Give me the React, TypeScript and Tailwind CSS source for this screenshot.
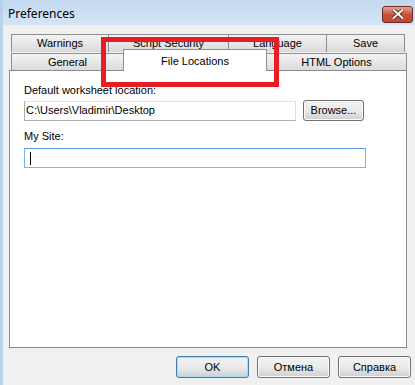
import React from 'react';

const ui = { fontFamily: '"Liberation Sans", Arial, sans-serif' };

function Tab({ label, w }: { label: string; w: number }) {
  return (
    <div
      className="h-[18px] flex items-center justify-center border border-[#8e8f8f] border-b-0 bg-gradient-to-b from-[#f3f3f3] to-[#dadada] text-[11px] text-black -ml-px first:ml-0"
      style={{ width: w }}
    >
      {label}
    </div>
  );
}

function Btn({ label, def, w = 73, h = 22 }: { label: string; def?: boolean; w?: number; h?: number }) {
  return (
    <div
      className={
        'flex items-center justify-center rounded-[3px] border text-[11px] text-black bg-gradient-to-b from-[#f2f2f2] via-[#ebebeb] to-[#cfcfcf] ' +
        (def ? 'border-[#3c7fb1] shadow-[inset_0_0_0_1px_#a6dcf5]' : 'border-[#707070] shadow-[inset_0_0_0_1px_#fcfcfc]')
      }
      style={{ width: w, height: h }}
    >
      {label}
    </div>
  );
}

export default function App() {
  return (
    <div className="w-[415px] h-[385px] bg-[#f0f0f0] border-l-[3px] border-[#b9d1ea] flex flex-col overflow-hidden" style={ui}>
      {/* title bar */}
      <div className="h-[25px] -ml-[3px] pl-[8px] pr-[2px] flex items-center justify-between bg-gradient-to-b from-[#c2d8ee] to-[#d6e5f4]">
        <span className="text-[12px] text-black pt-[2px]" style={{ fontFamily: '"Noto Sans", "DejaVu Sans", sans-serif' }}>Preferences</span>
        <div className="w-[31px] h-[17px] mt-[3px] rounded-[3px] border border-[#6a2a2a] bg-gradient-to-b from-[#e8a393] via-[#c9523c] to-[#c2452f] flex items-center justify-center">
          <svg width="12" height="10" viewBox="0 0 12 10">
            <path d="M1.5 1 L10.5 9 M10.5 1 L1.5 9" stroke="#3b1a14" strokeWidth="3.4" strokeLinecap="square" />
            <path d="M1.5 1 L10.5 9 M10.5 1 L1.5 9" stroke="#ffffff" strokeWidth="2" strokeLinecap="square" />
          </svg>
        </div>
      </div>

      {/* tab strip */}
      <div className="pl-[8px] pt-[9px] flex flex-col">
        <div className="flex">
          <Tab label="Warnings" w={98} />
          <Tab label="Script Security" w={121} />
          <Tab label="Language" w={99} />
          <Tab label="Save" w={79} />
        </div>
        <div className="flex items-end">
          <Tab label="General" w={113} />
          <div className="relative z-10 -ml-px -mt-[3px] w-[144px] h-[22px] bg-white border border-[#8e8f8f] border-b-0 flex items-start justify-center pt-[3px] text-[11px] text-black">
            File Locations
          </div>
          <div className="-ml-px">
            <Tab label="HTML Options" w={141} />
          </div>
        </div>
      </div>

      {/* panel */}
      <div className="ml-[6px] w-[398px] h-[278px] -mt-px bg-white border border-[#898c95] px-[14px] pt-[13px] text-[11px] text-black flex flex-col">
        <span className="leading-[13px]">Default worksheet location:</span>
        <div className="mt-[3px] flex items-center gap-[7px]">
          <div className="w-[272px] h-[20px] border border-[#abadb3] border-t-[#e2e3ea] border-r-[#dbdfe6] flex items-center pl-[1px]">C:\Users\Vladimir\Desktop</div>
          <Btn label="Browse..." w={61} h={21} />
        </div>
        <span className="mt-[9px] leading-[13px]">My Site:</span>
        <div className="mt-[5px] w-[342px] h-[20px] border border-[#7eb4ea] border-t-[#569de5] flex items-center pl-[5px]">
          <div className="w-px h-[13px] bg-black" />
        </div>
      </div>

      {/* buttons */}
      <div className="flex justify-end gap-[8px] pr-[4px] pt-[8px]">
        <Btn label="OK" def />
        <Btn label="Отмена" />
        <Btn label="Справка" />
      </div>

      {/* highlight */}
      <div className="absolute left-[101px] top-[37px] w-[178px] h-[50px] border-[5px] border-[#e81c24] z-20 pointer-events-none" />
    </div>
  );
}
